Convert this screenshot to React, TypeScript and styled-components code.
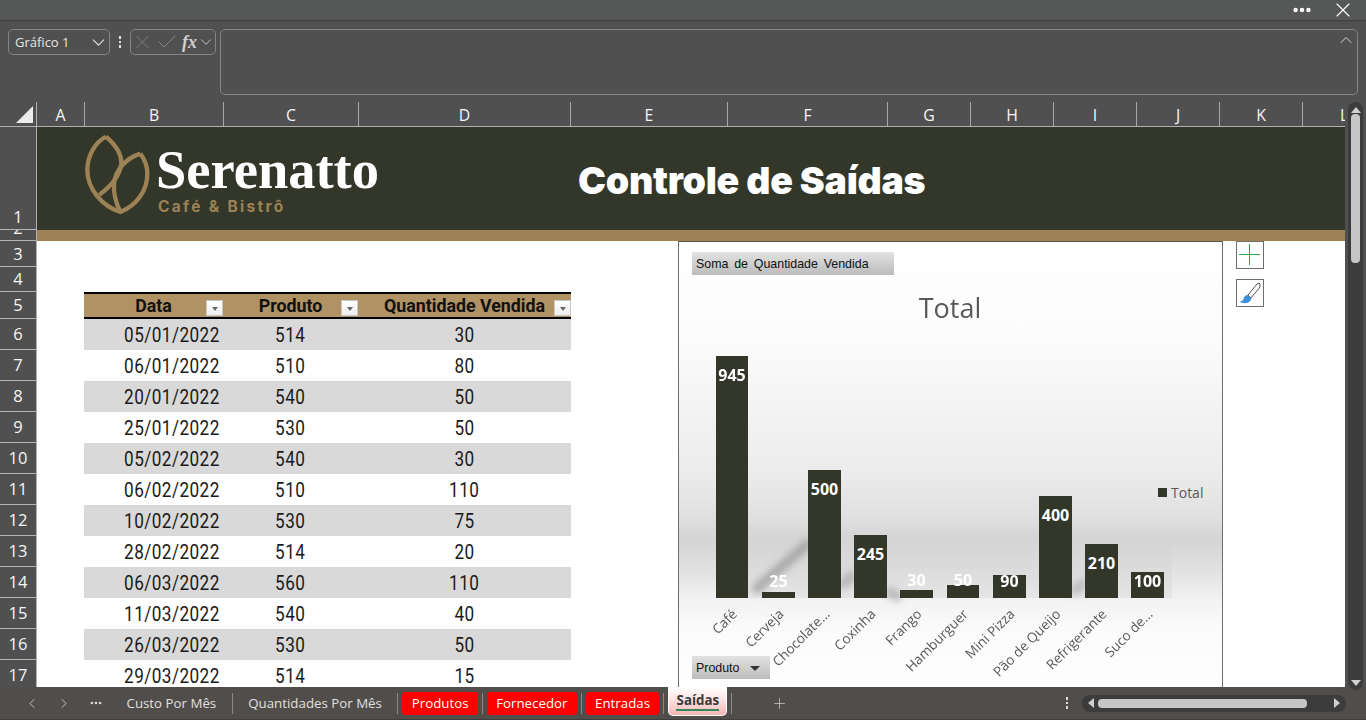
import React from 'react';
import styled, { createGlobalStyle } from 'styled-components';
import { ChevronDown, ChevronUp, ChevronLeft, ChevronRight, Check, X, Plus, MoreHorizontal } from 'lucide-react';

const GlobalStyle = createGlobalStyle`
  html, body { margin: 0; padding: 0; background: #505050; }
  * { box-sizing: border-box; }
`;

const uiFont = `"Open Sans", "Noto Sans", sans-serif`;
const cellFont = `Roboto, "Liberation Sans", sans-serif`;

const Window = styled.div`
  width: 1366px;
  height: 720px;
  overflow: hidden;
  display: flex;
  flex-direction: column;
  background: #505050;
  font-family: ${uiFont};
`;

const TitleStrip = styled.div`
  height: 21px;
  flex: none;
  display: flex;
  align-items: center;
  justify-content: flex-end;
  gap: 18px;
  padding-right: 11px;
  background: #565757;
  border-bottom: 1px solid #3e3e3e;
  color: #fff;
`;

const FormulaBar = styled.div`
  height: 81px;
  flex: none;
  display: flex;
  align-items: flex-start;
  padding: 8px 8px 0;
`;

const NameBox = styled.div`
  width: 102px;
  height: 26px;
  display: flex;
  align-items: center;
  justify-content: space-between;
  padding: 0 0 0 6px;
  border: 1px solid #858585;
  border-radius: 5px;
  color: #e6e6e6;
  font-size: 13px;
`;

const Grip = styled.div`
  width: 20px;
  height: 26px;
  display: flex;
  flex-direction: column;
  align-items: center;
  justify-content: center;
  gap: 2px;
  span { width: 2.5px; height: 2.5px; background: #e6e6e6; }
`;

const FxBox = styled.div`
  width: 86px;
  height: 26px;
  display: flex;
  align-items: center;
  overflow: hidden;
  border: 1px solid #858585;
  border-radius: 5px;
  color: #858585;
`;

const FxLabel = styled.span`
  margin-left: 3px;
  color: #d0d0d0;
  font-family: "Liberation Serif", serif;
  font-style: italic;
  font-weight: 700;
  font-size: 18px;
`;

const FormulaInput = styled.div`
  flex: 1;
  height: 66px;
  margin-left: 4px;
  display: flex;
  justify-content: flex-end;
  padding: 0 1px 0 0;
  border: 1px solid #858585;
  border-radius: 5px;
  color: #d8d8d8;
`;

const Workspace = styled.div`
  flex: 1;
  min-height: 0;
  display: flex;
`;

const SheetGrid = styled.div`
  width: 1345px;
  flex: none;
  display: grid;
  grid-template-columns: 37px 1fr;
  grid-template-rows: 25px 1fr;
  overflow: hidden;
`;

const Corner = styled.div`
  position: relative;
  border-right: 1px solid #b0b0b0;
  border-bottom: 1px solid #b0b0b0;
  &::after {
    content: '';
    position: absolute;
    right: 3px;
    bottom: 3px;
    border-style: solid;
    border-width: 0 0 17px 17px;
    border-color: transparent transparent #ececec transparent;
  }
`;

const ColumnHeaders = styled.div`
  display: flex;
  border-bottom: 1px solid #b0b0b0;
  overflow: hidden;
`;

const ColumnHeader = styled.div<{ $w: number }>`
  width: ${(p) => p.$w}px;
  flex: none;
  display: flex;
  align-items: center;
  justify-content: center;
  padding-top: 1px;
  border-right: 1px solid #a8a8a8;
  color: #f6f6f6;
  font-size: 15.8px;
`;

const RowHeaders = styled.div`
  display: flex;
  flex-direction: column;
  border-right: 1px solid #b0b0b0;
  overflow: hidden;
`;

const RowHeader = styled.div<{ $h: number; $lift?: number }>`
  height: ${(p) => p.$h}px;
  flex: none;
  display: flex;
  align-items: ${(p) => (p.$lift === undefined ? 'center' : 'flex-end')};
  justify-content: center;
  overflow: hidden;
  padding-bottom: ${(p) => p.$lift ?? 0}px;
  border-bottom: 1px solid #b4b4b4;
  color: #f6f6f6;
  font-size: 16.5px;
  line-height: 20px;
`;

const Sheet = styled.div`
  position: relative;
  background: #fff;
  overflow: hidden;
`;

const Banner = styled.div`
  height: 103px;
  display: flex;
  align-items: center;
  background: #323729;
`;

const BannerLogo = styled.div`
  width: 541px;
  flex: none;
  display: flex;
  align-items: center;
  padding-left: 45px;
  gap: 6px;
`;

const LogoSvg = styled.svg`
  margin-top: -8px;
  flex: none;
`;

const Wordmark = styled.div`
  display: flex;
  flex-direction: column;
  margin-top: 4px;
`;

const WordmarkName = styled.div`
  margin-left: -2px;
  color: #fff;
  font-family: "Liberation Serif", serif;
  font-weight: 700;
  font-size: 54.5px;
  line-height: 48px;
`;

const WordmarkSub = styled.div`
  margin-top: 4px;
  color: #9c8255;
  font-family: Inter, Roboto, sans-serif;
  font-weight: 700;
  font-size: 15.5px;
  line-height: 18px;
  letter-spacing: 2.3px;
`;

const BannerTitle = styled.h1`
  margin: 3px 0 0;
  color: #fff;
  font-family: Inter, Roboto, sans-serif;
  font-weight: 900;
  font-size: 37.5px;
  letter-spacing: -0.27px;
  white-space: nowrap;
`;

const TanBand = styled.div`
  height: 11px;
  background: #9c8255;
`;

const TableWrap = styled.div`
  width: 487px;
  margin: 51px 0 0 47px;
`;

const TableHead = styled.div`
  display: grid;
  grid-template-columns: 139px 135px 213px;
  height: 27px;
  background: #b09265;
  border-top: 2px solid #000;
  border-bottom: 2px solid #000;
`;

const HeadCell = styled.div`
  position: relative;
  display: flex;
  align-items: center;
  justify-content: center;
  color: #111;
  font-family: ${cellFont};
  font-weight: 700;
  font-size: 17.8px;
  white-space: nowrap;
`;

const FilterButton = styled.span`
  position: absolute;
  right: 0;
  bottom: 1px;
  width: 17px;
  height: 16px;
  display: flex;
  align-items: center;
  justify-content: center;
  background: linear-gradient(#fff, #ececec);
  border: 1px solid #c8c8c8;
  &::after {
    content: '';
    margin-top: 2px;
    border-style: solid;
    border-width: 4px 3.5px 0;
    border-color: #666 transparent transparent;
  }
`;

const DataRow = styled.div<{ $striped: boolean }>`
  display: grid;
  grid-template-columns: 139px 135px 213px;
  height: 31px;
  background: ${(p) => (p.$striped ? '#d9d9d9' : '#fff')};
  color: #1a1a1a;
  font-family: ${cellFont};
  font-size: 19.5px;
`;

const DataCell = styled.div`
  display: flex;
  align-items: center;
  justify-content: center;
  padding-top: 1px;
`;

const DateCell = styled(DataCell)`
  justify-content: flex-end;
  padding-right: 3px;
`;

// the sheet's font is narrower than anything installed
const NarrowText = styled.span<{ $origin?: string }>`
  display: inline-block;
  letter-spacing: 0.5px;
  transform: scaleX(0.88);
  transform-origin: ${(p) => p.$origin ?? 'center'};
`;

const ChartFrame = styled.div`
  position: absolute;
  left: 641px;
  top: 114px;
  width: 545px;
  height: 460px;
  border: 1px solid #6e6e6e;
  border-top-color: #555;
  background: linear-gradient(
    #fff 0%,
    #fcfcfc 20%,
    #ececec 50%,
    #e0e0e0 60%,
    #d4d4d4 65%,
    #e2e2e2 72%,
    #f2f2f2 78%,
    #fbfbfb 85%,
    #fff 100%
  );
`;

const ChartSvg = styled.svg`
  position: absolute;
  left: -1px;
  top: -1px;
`;

const PivotButton = styled.div<{ $w: number }>`
  position: absolute;
  left: 13px;
  width: ${(p) => p.$w}px;
  height: 23px;
  display: flex;
  align-items: center;
  justify-content: space-between;
  padding: 0 4px;
  background: linear-gradient(#e2e2e2, #bcbcbc);
  color: #111;
  font-family: "Liberation Sans", sans-serif;
  font-size: 12.4px;
  word-spacing: 2.4px;
  white-space: nowrap;
`;

const ValueButton = styled(PivotButton)`
  top: 10px;
`;

const FieldButton = styled(PivotButton)`
  top: 414px;
  &::after {
    content: '';
    margin: 2px 6px 0 0;
    border-style: solid;
    border-width: 5px 5px 0;
    border-color: #333 transparent transparent;
  }
`;

const ChartTool = styled.div<{ $top: number }>`
  position: absolute;
  left: 1199px;
  top: ${(p) => p.$top}px;
  width: 28px;
  height: 28px;
  display: flex;
  align-items: center;
  justify-content: center;
  background: #fff;
  border: 1px solid #6e6e6e;
`;

const VerticalScroll = styled.div`
  width: 21px;
  flex: none;
  padding: 0 3px;
  margin-bottom: -3px;
  position: relative;
  z-index: 1;
`;

const VerticalTrack = styled.div`
  height: 100%;
  display: flex;
  flex-direction: column;
  align-items: center;
  justify-content: space-between;
  padding: 5px 0 4px;
  background: #3c3c3c;
  border-radius: 8px;
`;

const ThumbV = styled.div`
  width: 9px;
  height: 149px;
  margin-top: 1px;
  margin-bottom: auto;
  background: #c6c6c6;
  border-radius: 4px;
`;

const Arrow = styled.span<{ $dir: 'up' | 'down' | 'left' | 'right' }>`
  flex: none;
  width: 0;
  height: 0;
  border-style: solid;
  border-color: transparent;
  ${(p) => p.$dir === 'up' && 'border-width: 0 5px 6px; border-bottom-color: #d0d0d0;'}
  ${(p) => p.$dir === 'down' && 'border-width: 6px 5px 0; border-top-color: #d0d0d0;'}
  ${(p) => p.$dir === 'left' && 'border-width: 5px 6px 5px 0; border-right-color: #d0d0d0;'}
  ${(p) => p.$dir === 'right' && 'border-width: 5px 0 5px 6px; border-left-color: #d0d0d0;'}
`;

const TabBar = styled.div`
  height: 33px;
  flex: none;
  display: flex;
  align-items: center;
  padding: 0 20px 0 24px;
  background: #504d4a;
  border-bottom: 1px solid #3f3f3f;
  color: #d8d8d8;
  font-size: 13.3px;
`;

const TabNav = styled.div`
  width: 16px;
  margin-right: 16px;
  display: flex;
  justify-content: center;
  color: #c8c8c8;
`;

const NavDots = styled(TabNav)`
  margin-right: 11px;
  color: #ddd;
`;

const Tab = styled.div<{ $red?: boolean }>`
  height: 23px;
  display: flex;
  align-items: center;
  padding: 0 ${(p) => (p.$red ? 9.3 : 11.5)}px;
  border-radius: 3px;
  white-space: nowrap;
  color: ${(p) => (p.$red ? '#fff' : '#e0e0e0')};
  background: ${(p) => (p.$red ? '#ff0000' : 'transparent')};
`;

const TabSep = styled.div`
  width: 1px;
  height: 21px;
  margin: 0 4px;
  background: #8a8a8a;
`;

const ActiveTab = styled.div`
  height: 29px;
  margin-top: -3px;
  padding: 0 7px;
  display: flex;
  flex-direction: column;
  align-items: center;
  justify-content: center;
  background: linear-gradient(#fff 0%, #ffe3e3 45%, #f5b4b4 100%);
  border: 1px solid #fff;
  border-top: 0;
  border-radius: 0 0 5px 5px;
  color: #3a3a3a;
  font-weight: 700;
  font-size: 13.3px;
  line-height: 16px;
  &::after {
    content: '';
    width: 43px;
    height: 2px;
    margin-top: 1px;
    background: #2e8b57;
  }
`;

const AddTab = styled.div`
  margin-left: 35px;
  display: flex;
  color: #c8c8c8;
`;

const TabGrip = styled(Grip)`
  margin-left: auto;
  margin-right: 5px;
  span { background: #ddd; }
`;

const HorizontalScroll = styled.div`
  width: 264px;
  height: 17px;
  display: flex;
  align-items: center;
  justify-content: space-between;
  padding: 0 6px;
  background: #3c3c3c;
  border-radius: 8px;
`;

const ThumbH = styled.div`
  width: 209px;
  height: 9px;
  margin-left: 4px;
  margin-right: auto;
  background: #c6c6c6;
  border-radius: 4px;
`;

const columns: [string, number][] = [
  ['A', 48], ['B', 139], ['C', 135], ['D', 212], ['E', 157], ['F', 160],
  ['G', 83], ['H', 83], ['I', 83], ['J', 83], ['K', 83], ['L', 83],
];

const rowHeights = [103, 11, 26, 25, 27, 31, 31, 31, 31, 31, 31, 31, 31, 31, 31, 31, 31];

const rows = [
  ['05/01/2022', '514', '30'], ['06/01/2022', '510', '80'], ['20/01/2022', '540', '50'],
  ['25/01/2022', '530', '50'], ['05/02/2022', '540', '30'], ['06/02/2022', '510', '110'],
  ['10/02/2022', '530', '75'], ['28/02/2022', '514', '20'], ['06/03/2022', '560', '110'],
  ['11/03/2022', '540', '40'], ['26/03/2022', '530', '50'], ['29/03/2022', '514', '15'],
];

// x, w, top and labelY are relative to the chart frame
const bars = [
  { name: 'Café', value: 945, x: 38, w: 32, top: 115, labelY: 134 },
  { name: 'Cerveja', value: 25, x: 84, w: 33, top: 351, labelY: 340 },
  { name: 'Chocolate...', value: 500, x: 130, w: 33, top: 229, labelY: 248 },
  { name: 'Coxinha', value: 245, x: 176, w: 33, top: 294, labelY: 313 },
  { name: 'Frango', value: 30, x: 222, w: 33, top: 349, labelY: 339 },
  { name: 'Hamburguer', value: 50, x: 269, w: 32, top: 344, labelY: 339 },
  { name: 'Mini Pizza', value: 90, x: 315, w: 33, top: 334, labelY: 340 },
  { name: 'Pão de Queijo', value: 400, x: 361, w: 33, top: 255, labelY: 274 },
  { name: 'Refrigerante', value: 210, x: 407, w: 33, top: 303, labelY: 322 },
  { name: 'Suco de...', value: 100, x: 453, w: 33, top: 331, labelY: 340 },
];

const BASE = 357;

function LogoMark() {
  return (
    <LogoSvg width="70" height="85" viewBox="0 0 210 255" fill="none" stroke="#9c8255" strokeWidth="13" strokeLinejoin="round">
      <path d="M72 14 C38 32 16 72 16 115 C16 170 60 222 115 240 C165 220 196 175 196 125 C196 105 188 82 175 65" />
      <path d="M72 14 C100 38 118 65 118 92 C116 130 85 165 52 188" />
      <path d="M175 65 C130 80 100 115 96 155 C94 190 105 220 115 240" />
    </LogoSvg>
  );
}

function BrushIcon() {
  return (
    <svg width="24" height="24" viewBox="0 0 24 24">
      <path d="M22 3 L21 2 L19 3 L10 14 L13 17 L22 6 Z" fill="#fff" stroke="#555" strokeWidth="1" />
      <path d="M10 14 C7 14 6 16 5.5 18 C5 20 3 20.5 1.5 20.5 C4 22.5 10 23 12 20 C13 19 13.5 18 13 17 Z" fill="#3f8fdc" />
    </svg>
  );
}

function PlusGlyph() {
  return (
    <svg width="26" height="26" viewBox="0 0 26 26" stroke="#2ea44f" strokeWidth="1">
      <path d="M12.5 2 V23 M2 12.5 H23" />
    </svg>
  );
}

function ChartPlot() {
  return (
    <ChartSvg width="545" height="460" viewBox="0 0 545 460">
      <defs>
        <filter id="soft" x="-40%" y="-40%" width="180%" height="180%">
          <feGaussianBlur stdDeviation="3.5" />
        </filter>
        <linearGradient id="plotShade" x1="0" y1="0" x2="0" y2="1">
          <stop offset="0" stopColor="#000" stopOpacity="0" />
          <stop offset="1" stopColor="#000" stopOpacity="0.05" />
        </linearGradient>
      </defs>
      <rect x="38" y="300" width="456" height="57" fill="url(#plotShade)" />
      <g stroke="#999" strokeWidth="10" fill="none" filter="url(#soft)">
        <path d="M76 350 L132 301" opacity="0.75" />
        <path d="M163 346 L176 332" opacity="0.6" />
        <path d="M209 349 L222 358" opacity="0.6" />
        <path d="M394 352 L407 340" opacity="0.5" />
      </g>
      <text x="272" y="77" textAnchor="middle" fontFamily="Open Sans, sans-serif" fontSize="27" fill="#595959">Total</text>
      {bars.map((b) => (
        <g key={b.name}>
          <rect x={b.x} y={b.top} width={b.w} height={BASE - b.top} fill="#323729" />
          <text
            x={b.x + b.w / 2}
            y={b.labelY + 6}
            textAnchor="middle"
            fontFamily="Open Sans, sans-serif"
            fontWeight="700"
            fontSize="16"
            fill="#fff"
          >
            {b.value}
          </text>
          <text
            transform={`translate(${b.x + b.w / 2 + 6} 374) rotate(-45)`}
            textAnchor="end"
            fontFamily="Open Sans, sans-serif"
            fontSize="13.6"
            fill="#595959"
          >
            {b.name}
          </text>
        </g>
      ))}
      <rect x="480" y="247" width="9" height="9" fill="#323729" />
      <text x="493" y="257" fontFamily="Open Sans, sans-serif" fontSize="14" fill="#595959">Total</text>
    </ChartSvg>
  );
}

export default function App() {
  return (
    <>
      <GlobalStyle />
      <Window>
        <TitleStrip>
          <MoreHorizontal size={22} strokeWidth={2.8} />
          <X size={24} strokeWidth={1.1} />
        </TitleStrip>
        <FormulaBar>
          <NameBox>
            Gráfico 1
            <ChevronDown size={21} strokeWidth={1.2} />
          </NameBox>
          <Grip><span /><span /><span /></Grip>
          <FxBox>
            <X size={26} strokeWidth={0.9} />
            <Check size={24} strokeWidth={1} style={{ marginLeft: 1, flex: 'none' }} />
            <FxLabel>fx</FxLabel>
            <ChevronDown size={18} strokeWidth={1.2} color="#d0d0d0" style={{ flex: 'none' }} />
          </FxBox>
          <FormulaInput>
            <ChevronUp size={20} strokeWidth={1.2} />
          </FormulaInput>
        </FormulaBar>
        <Workspace>
          <SheetGrid>
            <Corner />
            <ColumnHeaders>
              {columns.map(([name, w]) => (
                <ColumnHeader key={name} $w={w}>{name}</ColumnHeader>
              ))}
            </ColumnHeaders>
            <RowHeaders>
              {rowHeights.map((h, i) => (
                <RowHeader key={i} $h={h} $lift={i < 2 ? 2 : undefined}>{i + 1}</RowHeader>
              ))}
            </RowHeaders>
            <Sheet>
              <Banner>
                <BannerLogo>
                  <LogoMark />
                  <Wordmark>
                    <WordmarkName>Serenatto</WordmarkName>
                    <WordmarkSub>Café &amp; Bistrô</WordmarkSub>
                  </Wordmark>
                </BannerLogo>
                <BannerTitle>Controle de Saídas</BannerTitle>
              </Banner>
              <TanBand />
              <TableWrap>
                <TableHead>
                  <HeadCell>Data<FilterButton /></HeadCell>
                  <HeadCell>Produto<FilterButton /></HeadCell>
                  <HeadCell>Quantidade Vendida<FilterButton /></HeadCell>
                </TableHead>
                {rows.map((r, i) => (
                  <DataRow key={r[0]} $striped={i % 2 === 0}>
                    <DateCell><NarrowText $origin="right">{r[0]}</NarrowText></DateCell>
                    <DataCell><NarrowText>{r[1]}</NarrowText></DataCell>
                    <DataCell><NarrowText>{r[2]}</NarrowText></DataCell>
                  </DataRow>
                ))}
              </TableWrap>
              <ChartFrame>
                <ChartPlot />
                <ValueButton $w={202}>Soma de Quantidade Vendida</ValueButton>
                <FieldButton $w={78}>Produto</FieldButton>
              </ChartFrame>
              <ChartTool $top={114}>
                <PlusGlyph />
              </ChartTool>
              <ChartTool $top={152}>
                <BrushIcon />
              </ChartTool>
            </Sheet>
          </SheetGrid>
          <VerticalScroll>
            <VerticalTrack>
              <Arrow $dir="up" />
              <ThumbV />
              <Arrow $dir="down" />
            </VerticalTrack>
          </VerticalScroll>
        </Workspace>
        <TabBar>
          <TabNav><ChevronLeft size={17} strokeWidth={1.4} /></TabNav>
          <TabNav><ChevronRight size={17} strokeWidth={1.4} /></TabNav>
          <NavDots><MoreHorizontal size={14} strokeWidth={2.6} /></NavDots>
          <Tab>Custo Por Mês</Tab>
          <TabSep />
          <Tab>Quantidades Por Mês</Tab>
          <TabSep />
          <Tab $red>Produtos</Tab>
          <TabSep />
          <Tab $red>Fornecedor</Tab>
          <TabSep />
          <Tab $red>Entradas</Tab>
          <TabSep />
          <ActiveTab>Saídas</ActiveTab>
          <TabSep />
          <AddTab><Plus size={17} strokeWidth={1.1} /></AddTab>
          <TabGrip><span /><span /><span /></TabGrip>
          <HorizontalScroll>
            <Arrow $dir="left" />
            <ThumbH />
            <Arrow $dir="right" />
          </HorizontalScroll>
        </TabBar>
      </Window>
    </>
  );
}
